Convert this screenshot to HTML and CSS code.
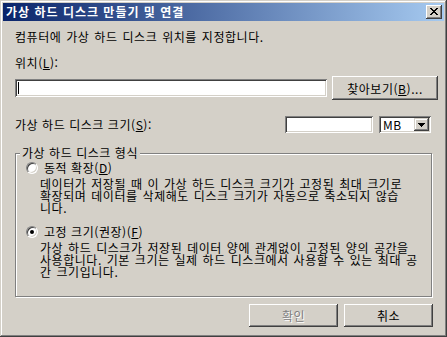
FILE: index.html
```html
<!DOCTYPE html>
<html lang="ko">
  <head>
    <meta charset="UTF-8" />
    <title>가상 하드 디스크 만들기 및 연결</title>
    <link rel="stylesheet" href="styles.css">
  </head>
  <body>
    <div class="window">
      <div class="titlebar">
        <span class="title">가상 하드 디스크 만들기 및 연결</span>
        <button class="close" aria-label="닫기">
          <svg width="16" height="14" viewBox="0 0 16 14">
            <path d="M4 3h2v1H4z M10 3h2v1h-2z M5 4h2v1H5z M9 4h2v1H9z M6 5h4v1H6z M7 6h2v1H7z M6 7h4v1H6z M5 8h2v1H5z M9 8h2v1H9z M4 9h2v1H4z M10 9h2v1h-2z" fill="#000" />
          </svg>
        </button>
      </div>

      <div class="client">
        <p class="intro">컴퓨터에 가상 하드 디스크 위치를 지정합니다.</p>

        <label class="field-label">위치(<u>L</u>):</label>
        <div class="path-row">
          <div class="textbox path"><span class="caret"></span></div>
          <button class="btn browse">찾아보기(<u>B</u>)...</button>
        </div>

        <div class="size-row">
          <span>가상 하드 디스크 크기(<u>S</u>):</span>
          <div class="size-inputs">
            <div class="textbox size"></div>
            <div class="textbox combo">
              <span class="combo-text">MB</span>
              <span class="drop">
                <svg width="7" height="4" viewBox="0 0 7 4">
                  <path d="M0 0h7v1H0z M1 1h5v1H1z M2 2h3v1H2z M3 3h1v1H3z" fill="#000" />
                </svg>
              </span>
            </div>
          </div>
        </div>

        <fieldset class="group">
          <legend>가상 하드 디스크 형식</legend>
          <div class="option first"><span class="radio"></span>동적 확장(<u>D</u>)</div>
          <p class="desc">
            데이터가 저장될 때 이 가상 하드 디스크 크기가 고정된 최대 크기로<br />
            확장되며 데이터를 삭제해도 디스크 크기가 자동으로 축소되지 않습<br />
            니다.
          </p>
          <div class="option second"><span class="radio checked"></span>고정 크기(권장)(<u>F</u>)</div>
          <p class="desc">
            가상 하드 디스크가 저장된 데이터 양에 관계없이 고정된 양의 공간을<br />
            사용합니다. 기본 크기는 실제 하드 디스크에서 사용할 수 있는 최대 공<br />
            간 크기입니다.
          </p>
        </fieldset>

        <div class="actions">
          <button class="btn action disabled">확인</button>
          <button class="btn action">취소</button>
        </div>
      </div>
    </div>
  </body>
</html>
```

FILE: styles.css
```css
body {
  margin: 0;
  background: #d4d0c8;
  font-family: "Noto Sans CJK KR", "Noto Sans", sans-serif;
  font-size: 12px;
  letter-spacing: 0.55px;
  color: #000;
}
.window {
  width: 447px;
  height: 337px;
  box-sizing: border-box;
  padding: 3px;
  background: #d4d0c8;
  box-shadow: inset -1px -1px #404040, inset 1px 1px #d4d0c8,
    inset -2px -2px #808080, inset 2px 2px #fff;
}

/* 타이틀 바 */
.titlebar {
  height: 18px;
  display: flex;
  align-items: center;
  justify-content: space-between;
  padding: 0 2px 0 3px;
  background: linear-gradient(to right, #0a246a, #a6caf0);
}
.title {
  color: #fff;
  font-weight: bold;
  line-height: 18px;
  letter-spacing: 1px;
}
.close {
  width: 16px;
  height: 14px;
  padding: 0;
  border: 0;
  background: #d4d0c8;
  box-shadow: inset -1px -1px #404040, inset 1px 1px #fff,
    inset -2px -2px #808080, inset 2px 2px #d4d0c8;
}
.close svg {
  display: block;
}

/* 본문 */
.client {
  padding: 9px 6px 0 12px;
}
.intro {
  margin: 0;
  line-height: 14px;
  word-spacing: 1px;
}
.field-label {
  display: block;
  margin-top: 12px;
  line-height: 14px;
}
.path-row {
  display: flex;
  align-items: center;
  gap: 5px;
  margin-top: 6px;
}
.textbox {
  background: #fff;
  box-sizing: border-box;
  box-shadow: inset 1px 1px #808080, inset -1px -1px #fff,
    inset 2px 2px #404040, inset -2px -2px #d4d0c8;
}
.path {
  width: 312px;
  height: 18px;
  display: flex;
  align-items: center;
  padding-left: 3px;
}
.caret {
  width: 1px;
  height: 12px;
  background: #000;
}
.btn {
  font-family: inherit;
  font-size: 12px;
  letter-spacing: inherit;
  color: #000;
  background: #d4d0c8;
  border: 0;
  padding: 0;
  box-shadow: inset -1px -1px #404040, inset 1px 1px #fff,
    inset -2px -2px #808080, inset 2px 2px #d4d0c8;
}
.browse {
  width: 106px;
  height: 24px;
}

.size-row {
  display: flex;
  align-items: center;
  justify-content: space-between;
  margin-top: 16px;
  padding-right: 7px;
  line-height: 14px;
}
.size-inputs {
  display: flex;
  gap: 6px;
}
.size {
  width: 88px;
  height: 17px;
}
.combo {
  width: 52px;
  height: 17px;
  padding: 2px;
  display: flex;
  align-items: center;
  justify-content: space-between;
}
.combo-text {
  padding-left: 2px;
  line-height: 13px;
}
.drop {
  width: 15px;
  height: 13px;
  display: flex;
  align-items: center;
  justify-content: center;
  background: #d4d0c8;
  box-shadow: inset -1px -1px #404040, inset 1px 1px #d4d0c8,
    inset -2px -2px #808080, inset 2px 2px #fff;
}
.drop svg {
  display: block;
}

/* 그룹 상자 */
.group {
  width: 417px;
  box-sizing: border-box;
  margin: 14px 0 0;
  padding: 0 0 18px;
  border: 1px solid #808080;
  box-shadow: 1px 1px 0 #fff, inset 1px 1px 0 #fff;
  min-inline-size: auto;
}
.group legend {
  margin-left: 4px;
  padding: 0 2px;
  line-height: 12px;
  background: #d4d0c8;
}
.option {
  display: flex;
  align-items: center;
  height: 12px;
  line-height: 12px;
  margin-left: 10px;
}
.option.first {
  margin-top: 3px;
}
.option.second {
  margin-top: 12px;
}
.radio {
  position: relative;
  width: 12px;
  height: 12px;
  box-sizing: border-box;
  margin-right: 6px;
  border-radius: 50%;
  border: 1px solid;
  border-color: #808080 #fff #fff #808080;
  background: #fff;
  box-shadow: inset 1px 1px #404040, inset -1px -1px #d4d0c8;
}
.radio.checked::after {
  content: "";
  position: absolute;
  left: 3px;
  top: 3px;
  width: 4px;
  height: 4px;
  border-radius: 50%;
  background: #000;
}
.desc {
  margin: 4px 0 0 24px;
  line-height: 12px;
  white-space: nowrap;
  word-spacing: 1px;
}

/* 하단 버튼 */
.actions {
  display: flex;
  justify-content: flex-end;
  gap: 6px;
  margin-top: 7px;
  padding-right: 5px;
}
.action {
  width: 89px;
  height: 23px;
}
.disabled {
  color: #808080;
  text-shadow: 1px 1px #fff;
}
```
